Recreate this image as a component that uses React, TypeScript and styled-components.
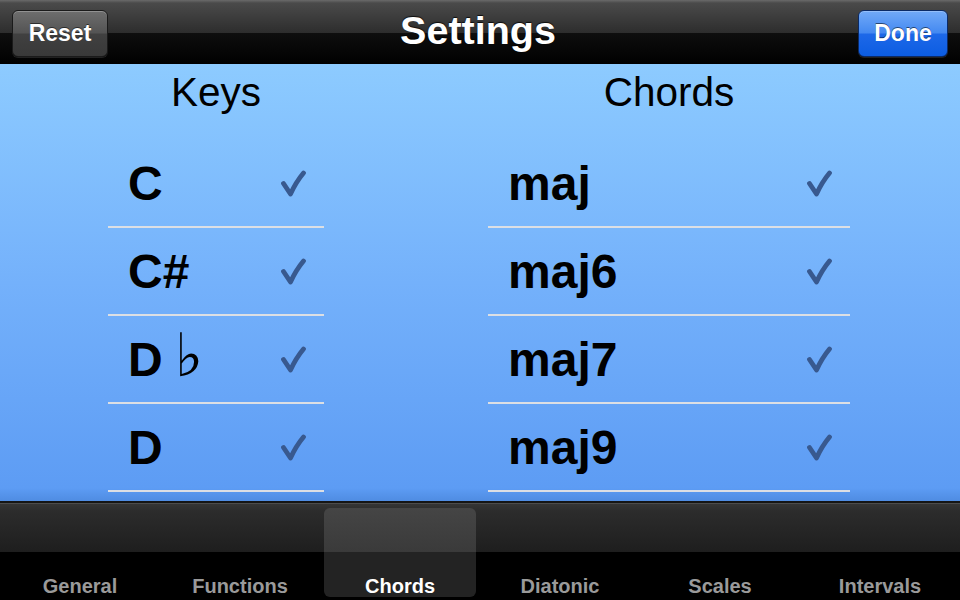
import styled, { createGlobalStyle } from "styled-components";

const GlobalStyle = createGlobalStyle`
  html, body {
    margin: 0;
    padding: 0;
    background: #000;
  }
  body {
    font-family: "Liberation Sans", Arial, sans-serif;
  }
`;

const Screen = styled.div`
  width: 960px;
  height: 600px;
  display: flex;
  flex-direction: column;
  overflow: hidden;
`;

const NavBar = styled.header`
  height: 64px;
  box-sizing: border-box;
  display: grid;
  grid-template-columns: 1fr auto 1fr;
  align-items: center;
  padding: 0 12px 0 12px;
  background: linear-gradient(
    #6a6a6a 0px,
    #4a4a4a 3px,
    #2d2d2d 33px,
    #0e0e0e 33px,
    #000 64px
  );
`;

const Title = styled.h1`
  margin: 0;
  color: #fff;
  font-size: 39.5px;
  font-weight: 700;
  line-height: 44px;
  text-shadow: 0 -1px 1px rgba(0, 0, 0, 0.8);
  transform: translate(-2px, -2px);
`;

const BarButton = styled.button<{ $primary?: boolean }>`
  justify-self: ${(p) => (p.$primary ? "end" : "start")};
  height: 47px;
  padding: 0 14px;
  min-width: ${(p) => (p.$primary ? "90px" : "96px")};
  margin-top: 3px;
  border-radius: 6px;
  border: 1px solid ${(p) => (p.$primary ? "#0b2a66" : "#1a1a1a")};
  color: #fff;
  font-family: "Liberation Sans", Arial, sans-serif;
  font-size: 23px;
  font-weight: 700;
  text-shadow: 0 -1px 0 rgba(0, 0, 0, 0.55);
  box-shadow: inset 0 1px 0 rgba(255, 255, 255, 0.25),
    0 1px 0 rgba(255, 255, 255, 0.12);
  background: ${(p) =>
    p.$primary
      ? "linear-gradient(#72aaf8 0%, #4489f1 48%, #1d68e8 52%, #0c5de2 100%)"
      : "linear-gradient(#6e6e6e 0%, #545454 48%, #404040 52%, #393939 100%)"};
`;

const Content = styled.main`
  flex: 1;
  display: grid;
  grid-template-columns: 216px 362px;
  column-gap: 164px;
  align-content: start;
  padding-left: 108px;
  background: linear-gradient(#8dcbff 0%, #74b1fb 50%, #5d9cf4 97%, #4f8ce2 100%);
`;

const Column = styled.section`
  display: flex;
  flex-direction: column;
`;

const Heading = styled.h2`
  margin: 0;
  height: 76px;
  padding-top: 5px;
  box-sizing: border-box;
  text-align: center;
  font-size: 40.5px;
  font-weight: 400;
  line-height: 46px;
  color: #000;
`;

const List = styled.ul`
  list-style: none;
  margin: 0;
  padding: 0;
`;

const Row = styled.li`
  height: 86px;
  display: flex;
  align-items: center;
  justify-content: space-between;
  padding: 0 18px 0 20px;
  border-bottom: 2px solid #dcdfe4;
`;

const Label = styled.span`
  display: flex;
  align-items: center;
  font-size: 48px;
  font-weight: 700;
  color: #000;
  line-height: 1;
  transform: translateY(1px);
`;

const Flat = styled.span`
  font-family: "DejaVu Sans", sans-serif;
  font-weight: 400;
  font-size: 60px;
  line-height: 1;
  margin-left: 12px;
  transform: translateY(-5px);
`;

const Check = styled.svg`
  width: 26px;
  height: 28px;
  flex-shrink: 0;
`;

const TabBar = styled.nav`
  height: 99px;
  box-sizing: border-box;
  display: grid;
  grid-template-columns: repeat(6, 1fr);
  border-top: 2px solid #151515;
  box-shadow: inset 0 1px 0 #4c4c4c;
  background: linear-gradient(
    #363636 0px,
    #2c2c2c 8px,
    #1e1e1e 49px,
    #000 49px,
    #000 100%
  );
`;

const Tab = styled.div<{ $active?: boolean }>`
  margin: 5px 4px 3px 4px;
  border-radius: 6px;
  display: flex;
  align-items: flex-end;
  justify-content: center;
  padding-bottom: 0;
  font-size: 20px;
  font-weight: 700;
  line-height: 22px;
  color: ${(p) => (p.$active ? "#fff" : "#9a9a9a")};
  background: ${(p) =>
    p.$active
      ? "linear-gradient(#454545 0%, #3a3a3a 49%, #232323 49%, #232323 100%)"
      : "transparent"};
`;

function CheckMark() {
  return (
    <Check viewBox="0 0 26 28">
      <path
        d="M3.5 14.5 L10.5 25 Q16 13 23.5 4"
        fill="none"
        stroke="#38598f"
        strokeWidth="4.8"
        strokeLinecap="round"
        strokeLinejoin="round"
      />
    </Check>
  );
}

const keys = ["C", "C#", "Db", "D"];
const chords = ["maj", "maj6", "maj7", "maj9"];
const tabs = ["General", "Functions", "Chords", "Diatonic", "Scales", "Intervals"];

function KeyLabel({ name }: { name: string }) {
  if (name.endsWith("b")) {
    return (
      <Label>
        {name[0]}
        <Flat>♭</Flat>
      </Label>
    );
  }
  return <Label>{name}</Label>;
}

export default function App() {
  return (
    <Screen>
      <GlobalStyle />
      <NavBar>
        <BarButton>Reset</BarButton>
        <Title>Settings</Title>
        <BarButton $primary>Done</BarButton>
      </NavBar>
      <Content>
        <Column>
          <Heading>Keys</Heading>
          <List>
            {keys.map((k) => (
              <Row key={k}>
                <KeyLabel name={k} />
                <CheckMark />
              </Row>
            ))}
          </List>
        </Column>
        <Column>
          <Heading>Chords</Heading>
          <List>
            {chords.map((c) => (
              <Row key={c}>
                <Label>{c}</Label>
                <CheckMark />
              </Row>
            ))}
          </List>
        </Column>
      </Content>
      <TabBar>
        {tabs.map((t) => (
          <Tab key={t} $active={t === "Chords"}>
            {t}
          </Tab>
        ))}
      </TabBar>
    </Screen>
  );
}
